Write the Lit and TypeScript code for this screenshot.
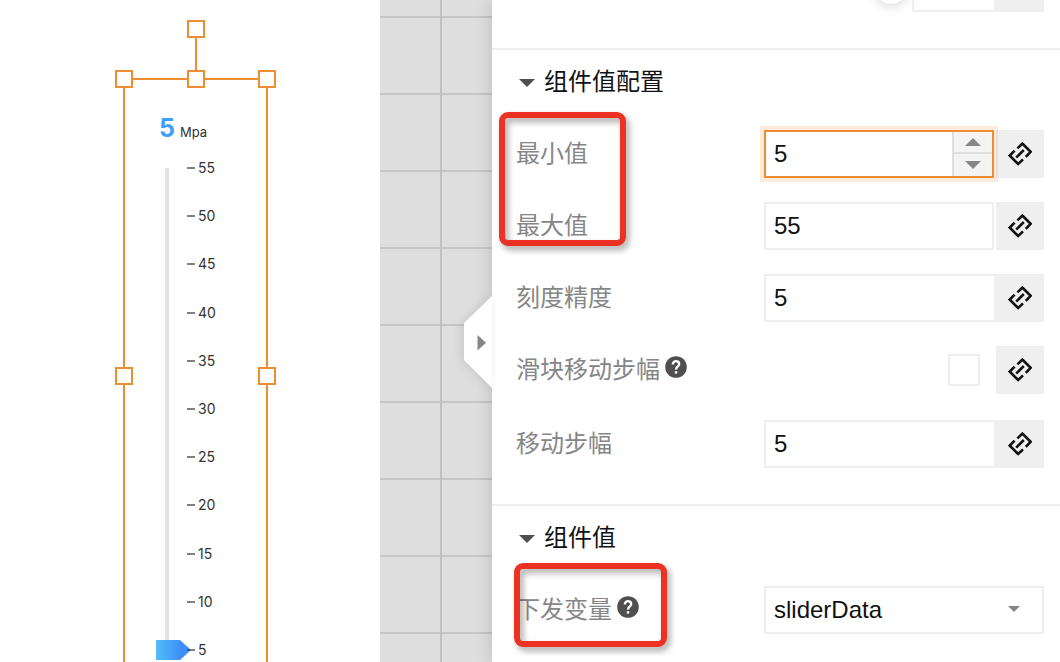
import { LitElement, html, css, svg, nothing } from "lit";
import { customElement, property, state } from "lit/decorators.js";

const linkIcon = html`<svg class="link-icon" viewBox="-12 -12 24 24" width="24" height="24" aria-hidden="true">
  ${svg`<path d="M-2.6 -5.6 L2.4 -10.4 L10.6 -2.2 L5.8 2.8 M-5.4 -3.4 L-10.2 1.6 L-1.8 10 L3 5.4 M-3.8 3.6 L3.8 -4" fill="none" stroke="#111" stroke-width="2.6"/>`}
</svg>`;

const helpIcon = html`<svg class="help" viewBox="0 0 22 22" width="22" height="22" role="img" aria-label="帮助">
  ${svg`<circle cx="11" cy="11" r="10.8" fill="#4f4f4f"/>
  <path d="M7.8 8.4 C7.8 6.4 9.2 5.2 11 5.2 C12.8 5.2 14.2 6.4 14.2 8.2 C14.2 10.4 11 10.6 11 13.6" fill="none" stroke="#fff" stroke-width="2.3"/>
  <rect x="9.8" y="15.2" width="2.4" height="2.4" fill="#fff"/>`}
</svg>`;

/** Vertical gauge slider with its selection frame. */
@customElement("gauge-slider")
export class GaugeSlider extends LitElement {
  @property({ type: Number }) min = 5;
  @property({ type: Number }) max = 55;
  @property({ type: Number }) step = 5;
  @property({ type: Number }) value = 5;
  @property() unit = "Mpa";

  static styles = css`
    :host {
      display: block;
      box-sizing: border-box;
      border: 2px solid #ef8d32;
      padding: 30px 0 12px 31px;
      font-family: Inter, "Liberation Sans", sans-serif;
      color: #333;
    }
    .reading { display: flex; align-items: baseline; gap: 5px; height: 48px; margin: 0 0 0 3px; line-height: 36px; font-size: 13px; }
    .reading strong { font-size: 25px; font-weight: 700; color: #409eff; }
    .scale { display: flex; height: 502px; }
    .range {
      appearance: none;
      writing-mode: vertical-lr;
      direction: rtl;
      width: 36px;
      height: 502px;
      margin: 0;
      background: linear-gradient(#e2e2e2, #e2e2e2) 9px 10px / 4px 100% no-repeat;
    }
    .range::-webkit-slider-thumb {
      appearance: none;
      width: 36px;
      height: 20px;
      background: linear-gradient(90deg, #54bdf8, #3d8ef8 70%);
      clip-path: polygon(0 0, 24px 0, 35px 50%, 24px 100%, 0 100%);
    }
    .ticks {
      display: flex;
      flex-direction: column;
      justify-content: space-between;
      position: relative;
      margin: 2px 0 2px -5px;
      padding: 0;
      list-style: none;
      font-size: 14px;
      line-height: 16px;
    }
    .ticks li { display: flex; align-items: center; gap: 3px; }
    .ticks li::before { content: ""; width: 8px; height: 2px; background: rgba(60, 60, 60, 0.65); }
    .handle { position: absolute; box-sizing: border-box; width: 18px; height: 18px; border: 2px solid #ef8d32; background: #fff; }
    .stem { position: absolute; left: 50%; top: -50px; width: 2px; height: 50px; margin-left: -1px; background: #ef8d32; }
    .rotate { left: 50%; top: -60px; margin-left: -9px; }
    .nw { left: -10px; top: -10px; }
    .n { left: 50%; top: -10px; margin-left: -9px; }
    .ne { right: -10px; top: -10px; }
    .w { left: -10px; top: 50%; margin-top: -9px; }
    .e { right: -10px; top: 50%; margin-top: -9px; }
    .sw { left: -10px; bottom: -10px; }
    .s { left: 50%; bottom: -10px; margin-left: -9px; }
    .se { right: -10px; bottom: -10px; }
  `;

  render() {
    const marks: number[] = [];
    for (let v = this.max; v >= this.min; v -= this.step) marks.push(v);
    return html`
      <p class="reading"><strong>${this.value}</strong><span>${this.unit}</span></p>
      <div class="scale">
        <input class="range" type="range" aria-label=${this.unit} min=${this.min} max=${this.max} step=${this.step} .value=${String(this.value)} />
        <ul class="ticks">${marks.map((m) => html`<li>${m}</li>`)}</ul>
      </div>
      <span class="stem"></span>
      ${["rotate", "nw", "n", "ne", "w", "e", "sw", "s", "se"].map((h) => html`<span class="handle ${h}"></span>`)}
    `;
  }
}

@customElement("app-root")
export class AppRoot extends LitElement {
  @state() private minValue = 5;

  static styles = css`
    :host {
      display: flex;
      height: 100vh;
      overflow: hidden;
      background: #fff;
      color: #111;
      font-family: "Liberation Sans", "Noto Sans CJK SC", sans-serif;
      font-size: 24px;
      line-height: 32px;
    }
    *, *::before, *::after { box-sizing: border-box; }
    .stage { display: flex; flex: 1; min-width: 0; }
    .artboard { position: relative; flex: 1; overflow: hidden; background: #fff; }
    .widget { position: absolute; left: 123px; top: 78px; width: 145px; height: 596px; }
    .backdrop {
      flex: 0 0 112px;
      background:
        linear-gradient(90deg, #c1c1c1, #c1c1c1) 60px 0 / 2px 100% no-repeat,
        linear-gradient(#c6c6c6 2px, transparent 2px) 0 16px / 100% 77px,
        #dedede;
    }
    .panel { position: relative; flex: 0 0 568px; background: #fff; box-shadow: 0 0 16px rgba(0, 0, 0, 0.16); }
    .collapse { position: absolute; left: -28px; top: 296px; width: 28px; height: 92px; padding: 0; border: 0; background: none; filter: drop-shadow(-2px 0 5px rgba(0, 0, 0, 0.1)); }
    .collapse svg { display: block; }
    .group { padding: 0 16px 36px 24px; border-bottom: 2px solid #efefef; }
    .group.scrolled { margin-top: -36px; }
    .group:last-child { border-bottom: 0; }
    h2 { display: flex; align-items: center; gap: 9px; margin: 0; padding: 16px 0 32px 3px; font-size: 24px; font-weight: 400; line-height: 32px; }
    h2 svg { margin-top: 2px; }
    .rows { position: relative; display: flex; flex-direction: column; gap: 24px; }
    .row { display: flex; align-items: center; }
    .row.tall { padding-bottom: 2px; }
    .label { display: flex; flex: 1; align-items: flex-start; gap: 5px; color: #868686; }
    .help { margin-top: 2px; }
    .control { display: flex; flex: 0 0 280px; min-width: 0; align-items: center; justify-content: flex-end; }
    .control.split { gap: 2px; }
    .field { display: flex; flex: 1; min-width: 0; height: 48px; border: 2px solid #efefef; background: #fff; }
    .field.short { flex: 0 0 84px; }
    .field.active { position: relative; border-color: #ef8d32; box-shadow: 0 0 0 4px rgba(245, 130, 50, 0.16); }
    .text { flex: 1; width: 100%; min-width: 0; padding: 0 8px; border: 0; outline: 0; background: none; color: #111; font: inherit; }
    .spin { display: flex; flex: 0 0 40px; flex-direction: column; border-left: 2px solid #dedede; background: #f4f4f4; }
    .spin button { display: flex; flex: 0 0 20px; align-items: center; justify-content: center; padding: 0; border: 0; background: none; }
    .spin button + button { flex: 1; border-top: 2px solid #dedede; }
    .bind { display: flex; flex: 0 0 48px; height: 48px; align-items: center; justify-content: center; padding: 0; border: 0; background: #efefef; }
    .check { appearance: none; width: 32px; height: 32px; margin: 0 16px 0 0; border: 2px solid #efefef; background: #fff; }
    .level { appearance: none; flex: 1; min-width: 0; height: 32px; margin: 0 5px 0 0; background: linear-gradient(#efefef, #efefef) 0 50% / 100% 4px no-repeat; }
    .level::-webkit-slider-thumb { appearance: none; width: 32px; height: 32px; border-radius: 50%; background: #fff; box-shadow: 0 2px 12px rgba(0, 0, 0, 0.16); }
    .picker { position: relative; display: flex; flex: 1; }
    .picker select { appearance: none; width: 100%; height: 48px; padding: 0 8px; border: 2px solid #efefef; border-radius: 0; background: #fff; color: #111; font: inherit; }
    .picker svg { position: absolute; right: 24px; top: 20px; pointer-events: none; }
    .mark { position: absolute; border: 6px solid #ec3323; border-radius: 9px; filter: drop-shadow(3px 4px 3px rgba(0, 0, 0, 0.35)); pointer-events: none; }
    .mark.limits { left: -17px; top: -18px; width: 127px; height: 134px; }
    .mark.variable { left: -2px; top: -23px; width: 153px; height: 84px; }
  `;

  private triangle(width: number, height: number, color: string, up = false) {
    const d = up ? `M0 ${height} L${width / 2} 0 L${width} ${height} Z` : `M0 0 L${width} 0 L${width / 2} ${height} Z`;
    return html`<svg width=${width} height=${height} viewBox="0 0 ${width} ${height}" aria-hidden="true">${svg`<path d=${d} fill=${color} />`}</svg>`;
  }

  private bind(name: string) {
    return html`<button class="bind" type="button" aria-label=${name}>${linkIcon}</button>`;
  }

  private spinner() {
    return html`<span class="spin">
      <button type="button" aria-label="+" @click=${() => this.minValue++}>${this.triangle(16, 8, "#868686", true)}</button>
      <button type="button" aria-label="−" @click=${() => this.minValue--}>${this.triangle(16, 8, "#868686")}</button>
    </span>`;
  }

  private numberRow(id: string, label: string, value: number, split = false, active = false) {
    return html`<div class="row">
      <label class="label" for=${id}>${label}</label>
      <div class="control ${split ? "split" : ""}">
        <span class="field ${active ? "active" : ""}">
          <input class="text" id=${id} type="text" inputmode="numeric" .value=${String(value)} />
          ${active ? this.spinner() : nothing}
        </span>
        ${this.bind(label)}
      </div>
    </div>`;
  }

  render() {
    return html`
      <main class="stage">
        <div class="artboard"><gauge-slider class="widget"></gauge-slider></div>
        <div class="backdrop"></div>
      </main>
      <aside class="panel">
        <button class="collapse" type="button" aria-label="收起">
          <svg width="28" height="92" viewBox="0 0 28 92">
            <path d="M28 0 L0 27 V64 L28 92 Z" fill="#fff" />
            <path d="M13.5 39 L22 46.8 L13.5 54.5 Z" fill="#868686" />
          </svg>
        </button>
        <section class="group scrolled">
          <div class="row">
            <span class="label"></span>
            <div class="control">
              <input class="level" type="range" aria-label="%" min="0" max="100" value="100" />
              <span class="field short"><input class="text" type="text" aria-label="%" /></span>
              ${this.bind("%")}
            </div>
          </div>
        </section>
        <section class="group">
          <h2>${this.triangle(16, 8, "#4f4f4f")}<span>组件值配置</span></h2>
          <div class="rows">
            ${this.numberRow("min", "最小值", this.minValue, true, true)}
            ${this.numberRow("max", "最大值", 55, true)}
            ${this.numberRow("precision", "刻度精度", 5)}
            <div class="row tall">
              <label class="label" for="stride-on">滑块移动步幅${helpIcon}</label>
              <div class="control">
                <input class="check" id="stride-on" type="checkbox" />
                ${this.bind("滑块移动步幅")}
              </div>
            </div>
            ${this.numberRow("stride", "移动步幅", 5)}
            <span class="mark limits"></span>
          </div>
        </section>
        <section class="group">
          <h2>${this.triangle(16, 8, "#4f4f4f")}<span>组件值</span></h2>
          <div class="rows">
            <div class="row">
              <label class="label" for="variable">下发变量${helpIcon}</label>
              <div class="control">
                <span class="picker">
                  <select id="variable"><option>sliderData</option></select>
                  ${this.triangle(12, 6, "#868686")}
                </span>
              </div>
            </div>
            <span class="mark variable"></span>
          </div>
        </section>
      </aside>
    `;
  }
}
